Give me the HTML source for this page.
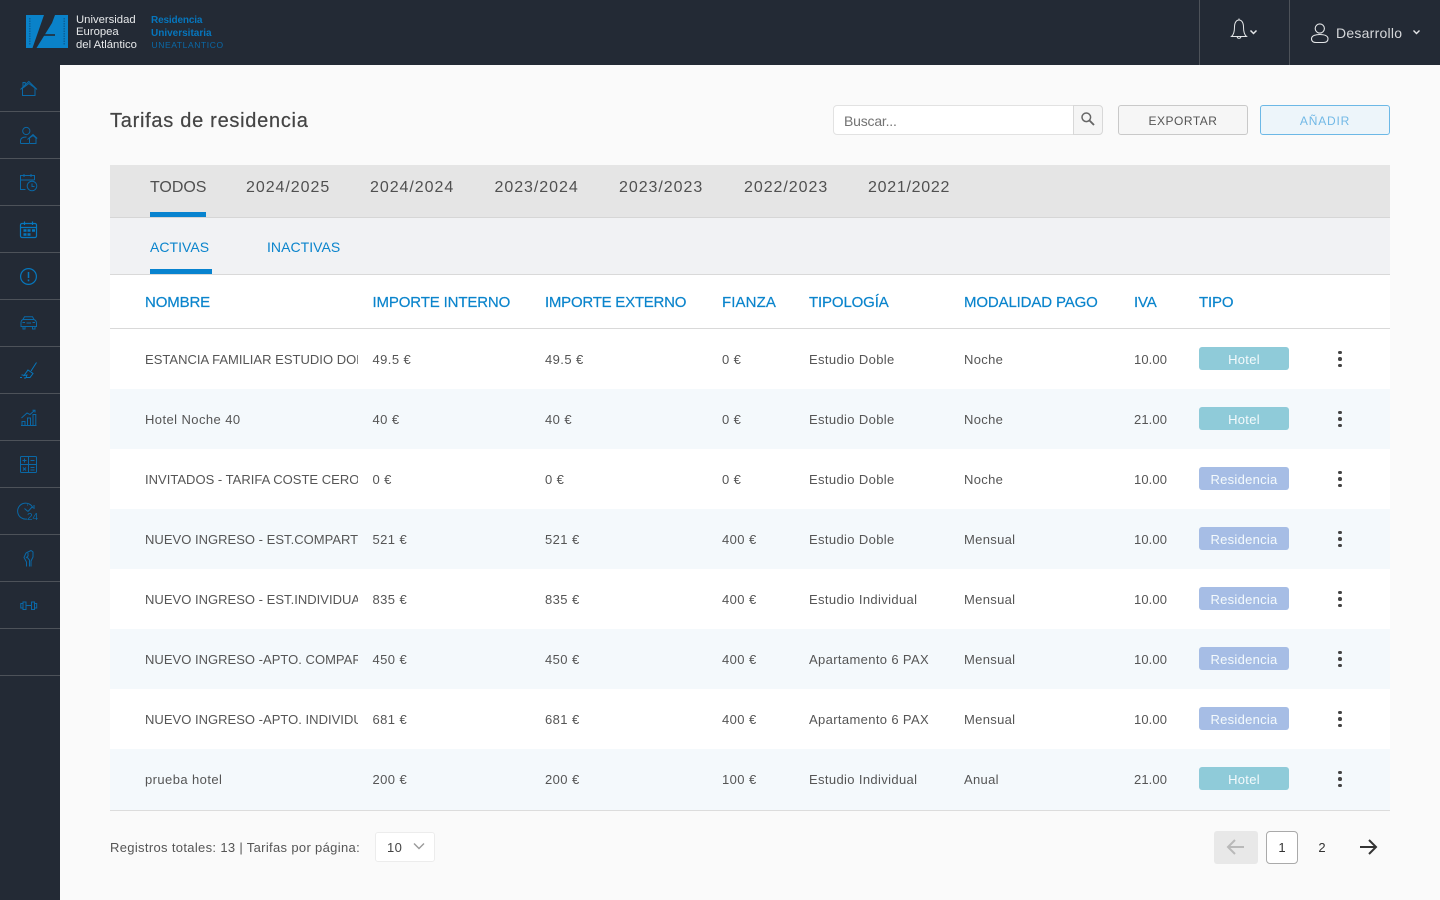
<!DOCTYPE html>
<html lang="es"><head><meta charset="utf-8"><title>Tarifas de residencia</title>
<style>
*{box-sizing:border-box}
html,body{margin:0;padding:0;width:1440px;height:900px;overflow:hidden;background:#fafafa;font-family:"Liberation Sans",sans-serif;color:#555}
.a{position:absolute;white-space:nowrap}
.top{position:absolute;left:0;top:0;width:1440px;height:65px;background:#232a35}
.side{position:absolute;left:0;top:65px;width:60px;height:835px;background:#232a35}
.div{position:absolute;left:0;width:60px;height:1px;background:#4d5259}
.tab{position:absolute;top:165px;height:52px;line-height:46px;font-size:16px;letter-spacing:.95px;color:#505050}
.sub{position:absolute;top:218px;height:56px;line-height:58px;font-size:14px;letter-spacing:.04px;color:#0a84cc}
.th{position:absolute;top:275px;height:53px;line-height:55px;font-size:15px;letter-spacing:-.14px;color:#0a84cc;-webkit-text-stroke:.2px #0a84cc}
.row{position:absolute;left:110px;width:1280px;height:60px;line-height:61px;font-size:13px;letter-spacing:.42px;color:#555;background:#fff}
.row.e{background:#f4f9fc}
.row span{position:absolute;top:0;white-space:nowrap}
.c1{left:35px;width:212.5px;overflow:hidden}
.c1.u{letter-spacing:.02px}
.c2{left:262.5px}.c3{left:435px}.c4{left:612px}.c5{left:699px;letter-spacing:.36px}.c6{left:854px;letter-spacing:.32px}.c7{left:1024px;letter-spacing:.1px}
.b{position:absolute;left:1089px;top:18px;width:90px;height:23px;border-radius:3px;line-height:25px;text-align:center;color:#f4fafc;font-size:13px;letter-spacing:.28px}
.h{background:#8fcbd9}.r{background:#a6bde5}
.k{position:absolute;left:1228px;width:3.6px;height:3.6px;border-radius:50%;background:#444}
</style></head><body>
<div class="top"></div>
<div class="side"></div>
<div class="div" style="top:111px"></div><div class="div" style="top:158px"></div><div class="div" style="top:205px"></div><div class="div" style="top:252px"></div><div class="div" style="top:299px"></div><div class="div" style="top:346px"></div><div class="div" style="top:393px"></div><div class="div" style="top:440px"></div><div class="div" style="top:487px"></div><div class="div" style="top:534px"></div><div class="div" style="top:581px"></div><div class="div" style="top:628px"></div><div class="div" style="top:675px"></div>

<!-- logo -->
<svg class="a" style="left:25px;top:14px" width="44" height="35" viewBox="0 0 44 35">
<rect x="1" y="1" width="42" height="33" fill="#0a82c9"/>
<path d="M19 1 H30 L27 9 L11.5 34 H7.5 Z" fill="#232a35"/>
<path d="M14 21 H30" stroke="#232a35" stroke-width="1.6"/>
<path d="M4.8 4 V31 M39.2 4 V31" stroke="#0a5f97" stroke-width="1.4" stroke-dasharray="1.5 1"/>
</svg>
<div class="a" style="left:76px;top:14px;font-size:11.3px;line-height:12px;color:#e6e8ea">Universidad<br>Europea<br><span style="position:relative;top:1px">del Atlántico</span></div>
<div class="a" style="left:151px;top:14px;font-size:10px;line-height:13px;font-weight:bold;color:#0676bd"><span style="letter-spacing:-.15px">Residencia</span><br>Universitaria</div>
<div class="a" style="left:151.5px;top:40px;font-size:8.5px;line-height:10px;color:#0a69a8;letter-spacing:.6px">UNEATLANTICO</div>

<!-- header right -->
<div class="a" style="left:1199px;top:0;width:1px;height:65px;background:#4d5259"></div>
<div class="a" style="left:1289px;top:0;width:1px;height:65px;background:#4d5259"></div>
<svg class="a" style="left:1225px;top:15px" width="40" height="30" fill="none" stroke="#e4e6e8" stroke-width="1">
<path d="M6.5 21.5 C9 19.5 9.5 16.5 9.5 12 C9.5 7.5 11.5 5 14 5 C16.5 5 18.5 7.5 18.5 12 C18.5 16.5 19 19.5 21.5 21.5 Z"/>
<path d="M12.2 22 C12.4 23.8 15.6 23.8 15.8 22"/><path d="M14 3.5 V5"/>
<path d="M25.5 15.5 L28.5 18.5 L31.5 15.5" stroke-width="1.5"/></svg>
<svg class="a" style="left:1310px;top:22px" width="20" height="22" fill="none" stroke="#e4e6e8" stroke-width="1.1">
<circle cx="9.8" cy="6.5" r="4.6"/>
<path d="M1.5 16.8 C1.5 13.5 6 12.5 9.8 12.5 C13.6 12.5 18 13.5 18 16.8 C18 19.5 16 20.5 13.5 20.5 H6 C3.5 20.5 1.5 19.5 1.5 16.8Z"/></svg>
<div class="a" style="left:1336px;top:23px;font-size:14px;line-height:20px;letter-spacing:.25px;color:#d5d7da">Desarrollo</div>
<svg class="a" style="left:1412px;top:29px" width="10" height="8" fill="none" stroke="#e4e6e8" stroke-width="1.4"><path d="M1.5 1.5 L4.5 4.5 L7.5 1.5"/></svg>

<!-- sidebar icons -->
<svg class="a" style="left:0;top:0" width="60" height="700" fill="none" stroke="#0a68a6" stroke-width="1">
<path d="M20.5 89.5 L28.8 81.5 L37 89.5 M23 87 V82.5 H25.2 V84.8 M22.5 88 V95.5 H35 V88 M23 88 L28.8 83.5 L35 88"/>
<circle cx="26.3" cy="131" r="3.6"/><path d="M20.5 143.5 V141 C20.5 138 23 137 26.5 137 M20.5 143.5 H29 M29.5 143.5 H36 V138 L33 135.5 L29.5 138 V143.5 M27.5 139.5 L33 134.5 L37.2 138.5"/>
<path d="M25.5 189.5 H20.5 V175.5 H34.5 V180 M20.5 180 H34.5 M24 174 V177 M31 174 V177"/><circle cx="32" cy="186" r="4.8"/><path d="M32 183.5 V186.5 H34.5"/>
<g stroke="#0677bd" stroke-width="1.2"><rect x="20.5" y="223.5" width="16" height="14" rx="1.5"/><path d="M20.5 227.5 H36.5 M24.5 221.5 V225 M32.5 221.5 V225"/><path d="M23.5 230.5 h3 M27.5 230.5 h3 M32 230.5 h3 M23.5 234.5 h3 M27.5 234.5 h3" stroke-width="2.4"/></g>
<g stroke="#0677bd" stroke-width="1.2"><circle cx="28.5" cy="276.5" r="7.9"/><path d="M28.5 272 V278 M28.5 279.5 V281.3" stroke-width="1.5"/></g>
<path d="M21 323 C21 320.5 22 320 23 319.5 L24.5 316.8 H32.5 L34 319.5 C35 320 36.5 320.5 36.5 323 V326.5 H21 Z M23 319.5 H34 M23 326.5 V329 H25 V326.5 M32.5 326.5 V329 H35 V326.5 M22.5 322.5 h2.5 M32.5 322.5 h2.5 M26.5 323 h4.5" />
<path stroke="#0677bd" d="M36.5 362.5 L31 371 M28 370 L33 373.5 L30 377.5 L26 377.5 L27 375 L24 375.5 Z M20 377.5 h2 M21.5 375 h2 M24 378 h2" />
<path d="M21 425.5 H36.5 M22 425 V421.5 H25 V425 M27.5 425 V418 H30.5 V425 M33 425 V414.5 H35.8 V425 M21.5 418 L27 413 L30 414.5 L34.5 410.5 M32.5 410.3 H35 V412.5" />
<rect x="20.5" y="456.5" width="16" height="16" rx="1"/><path d="M28.5 456.5 V472.5 M20.5 464.5 H36.5 M22.5 460.5 h4 M24.5 458.5 v4 M30.5 460.5 h4 M23 467.5 l3 3 M26 467.5 l-3 3 M30.5 467.5 h4 M30.5 470 h4"/>
<path d="M33 508 A8 8 0 1 0 27 519 M28 511.5 L32.5 506.5 M28 511.5 L24.5 508.5 M34 505 V509 M27.5 504.5 v1"/>
<text x="27" y="520" font-family="Liberation Sans,sans-serif" font-size="10" fill="#0a68a6" stroke="none">24</text>
<path d="M26 553 L31 550.5 L33 552 V557 L31 561 V566.5 M26.5 566.5 V562 L24 557.5 L26 553 M27 557 L29.5 560 V566.5 M28 553 V556 M26 558 L28.5 555.5" />
<path d="M26 605.5 H31.5"/><path d="M23 602 H26 V609.5 H23 Z M31.5 602 H34.5 V609.5 H31.5 Z M23 603.5 H20.8 V608 H23 M34.5 603.5 H36.7 V608 H34.5"/>
</svg>

<!-- title row -->
<div class="a" style="left:110px;top:108px;font-size:20px;line-height:26px;letter-spacing:.72px;color:#444;-webkit-text-stroke:.2px #444">Tarifas de residencia</div>
<div class="a" style="left:833px;top:105px;width:241px;height:30px;background:#fff;border:1px solid #e2e2e2;border-radius:4px 0 0 4px;font-size:14px;line-height:30px;padding-left:10px;color:#737373;letter-spacing:-.2px">Buscar...</div>
<div class="a" style="left:1073px;top:105px;width:30px;height:30px;background:#f5f5f5;border:1px solid #d8d8d8;border-radius:0 4px 4px 0"></div>
<svg class="a" style="left:1080px;top:111px" width="16" height="16" fill="none" stroke="#666" stroke-width="1.5"><circle cx="6.3" cy="6.3" r="4.3"/><path d="M9.5 9.5 L14 14" stroke-width="1.9"/></svg>
<div class="a" style="left:1118px;top:105px;width:130px;height:30px;background:#f6f6f6;border:1px solid #c9c9c9;border-radius:3px;text-align:center;font-size:12px;line-height:30px;letter-spacing:.5px;color:#555">EXPORTAR</div>
<div class="a" style="left:1260px;top:105px;width:130px;height:30px;background:#edf5fa;border:1px solid #6cb8e6;border-radius:3px;text-align:center;font-size:12px;line-height:30px;letter-spacing:.8px;color:#72b9e6">AÑADIR</div>

<!-- tabs -->
<div class="a" style="left:110px;top:165px;width:1280px;height:53px;background:#e5e5e5;border-bottom:1px solid #d6d6d6"></div>
<div class="a" style="left:110px;top:218px;width:1280px;height:57px;background:#f1f2f4;border-bottom:1px solid #d9d9d9"></div>
<div class="tab" style="left:150px;letter-spacing:-.05px">TODOS</div>
<div class="tab" style="left:246px">2024/2025</div>
<div class="tab" style="left:370px">2024/2024</div>
<div class="tab" style="left:494.5px">2023/2024</div>
<div class="tab" style="left:619px">2023/2023</div>
<div class="tab" style="left:744px">2022/2023</div>
<div class="tab" style="left:868px;letter-spacing:.72px">2021/2022</div>
<div class="a" style="left:150px;top:212px;width:56px;height:5px;background:#0883cf"></div>
<div class="sub" style="left:150px">ACTIVAS</div>
<div class="sub" style="left:267px">INACTIVAS</div>
<div class="a" style="left:150px;top:269px;width:62px;height:5px;background:#0883cf"></div>

<!-- table head -->
<div class="a" style="left:110px;top:275px;width:1280px;height:54px;background:#fff;border-bottom:1px solid #d9d9d9"></div>
<div class="th" style="left:145px">NOMBRE</div>
<div class="th" style="left:372.5px">IMPORTE INTERNO</div>
<div class="th" style="left:545px;letter-spacing:-.24px">IMPORTE EXTERNO</div>
<div class="th" style="left:722px;letter-spacing:.1px">FIANZA</div>
<div class="th" style="left:809px">TIPOLOGÍA</div>
<div class="th" style="left:964px">MODALIDAD PAGO</div>
<div class="th" style="left:1134px">IVA</div>
<div class="th" style="left:1199px">TIPO</div>

<!-- rows -->
<div class="row" style="top:329px"><span class="c1 u">ESTANCIA FAMILIAR ESTUDIO DOBLE</span><span class="c2">49.5 €</span><span class="c3">49.5 €</span><span class="c4">0 €</span><span class="c5">Estudio Doble</span><span class="c6">Noche</span><span class="c7">10.00</span><div class="b h">Hotel</div><i class="k" style="top:21.5px"></i><i class="k" style="top:28.2px"></i><i class="k" style="top:34.6px"></i></div>
<div class="row e" style="top:389px"><span class="c1">Hotel Noche 40</span><span class="c2">40 €</span><span class="c3">40 €</span><span class="c4">0 €</span><span class="c5">Estudio Doble</span><span class="c6">Noche</span><span class="c7">21.00</span><div class="b h">Hotel</div><i class="k" style="top:21.5px"></i><i class="k" style="top:28.2px"></i><i class="k" style="top:34.6px"></i></div>
<div class="row" style="top:449px"><span class="c1 u">INVITADOS - TARIFA COSTE CERO</span><span class="c2">0 €</span><span class="c3">0 €</span><span class="c4">0 €</span><span class="c5">Estudio Doble</span><span class="c6">Noche</span><span class="c7">10.00</span><div class="b r">Residencia</div><i class="k" style="top:21.5px"></i><i class="k" style="top:28.2px"></i><i class="k" style="top:34.6px"></i></div>
<div class="row e" style="top:509px"><span class="c1 u">NUEVO INGRESO - EST.COMPARTIDO</span><span class="c2">521 €</span><span class="c3">521 €</span><span class="c4">400 €</span><span class="c5">Estudio Doble</span><span class="c6">Mensual</span><span class="c7">10.00</span><div class="b r">Residencia</div><i class="k" style="top:21.5px"></i><i class="k" style="top:28.2px"></i><i class="k" style="top:34.6px"></i></div>
<div class="row" style="top:569px"><span class="c1 u">NUEVO INGRESO - EST.INDIVIDUAL</span><span class="c2">835 €</span><span class="c3">835 €</span><span class="c4">400 €</span><span class="c5">Estudio Individual</span><span class="c6">Mensual</span><span class="c7">10.00</span><div class="b r">Residencia</div><i class="k" style="top:21.5px"></i><i class="k" style="top:28.2px"></i><i class="k" style="top:34.6px"></i></div>
<div class="row e" style="top:629px"><span class="c1 u">NUEVO INGRESO -APTO. COMPARTIDO</span><span class="c2">450 €</span><span class="c3">450 €</span><span class="c4">400 €</span><span class="c5">Apartamento 6 PAX</span><span class="c6">Mensual</span><span class="c7">10.00</span><div class="b r">Residencia</div><i class="k" style="top:21.5px"></i><i class="k" style="top:28.2px"></i><i class="k" style="top:34.6px"></i></div>
<div class="row" style="top:689px"><span class="c1 u">NUEVO INGRESO -APTO. INDIVIDUAL</span><span class="c2">681 €</span><span class="c3">681 €</span><span class="c4">400 €</span><span class="c5">Apartamento 6 PAX</span><span class="c6">Mensual</span><span class="c7">10.00</span><div class="b r">Residencia</div><i class="k" style="top:21.5px"></i><i class="k" style="top:28.2px"></i><i class="k" style="top:34.6px"></i></div>
<div class="row e" style="top:749px;height:62px;border-bottom:1px solid #dcdcdc"><span class="c1">prueba hotel</span><span class="c2">200 €</span><span class="c3">200 €</span><span class="c4">100 €</span><span class="c5">Estudio Individual</span><span class="c6">Anual</span><span class="c7">21.00</span><div class="b h">Hotel</div><i class="k" style="top:21.5px"></i><i class="k" style="top:28.2px"></i><i class="k" style="top:34.6px"></i></div>

<!-- footer -->
<div class="a" style="left:110px;top:839px;font-size:13px;line-height:18px;letter-spacing:.33px;color:#555">Registros totales: 13 | Tarifas por página:</div>
<div class="a" style="left:375px;top:832px;width:60px;height:30px;background:#fff;border:1px solid #ececec;border-radius:3px;font-size:13px;line-height:30px;padding-left:11px;color:#444;letter-spacing:.4px">10</div>
<svg class="a" style="left:413px;top:842px" width="13" height="10" fill="none" stroke="#999" stroke-width="1.4"><path d="M1 1.5 L6 6.5 L11 1.5"/></svg>
<div class="a" style="left:1214px;top:831px;width:44px;height:33px;background:#e8e8e8;border-radius:3px"></div>
<svg class="a" style="left:1226px;top:838px" width="20" height="18" fill="none" stroke="#b9b9b9" stroke-width="2"><path d="M18 9 H2 M9 2 L2 9 L9 16"/></svg>
<div class="a" style="left:1266px;top:831px;width:32px;height:33px;background:#fff;border:1px solid #aaa;border-radius:4px;text-align:center;font-size:13px;line-height:32px;color:#333">1</div>
<div class="a" style="left:1306px;top:831px;width:32px;height:33px;text-align:center;font-size:13px;line-height:33px;color:#333">2</div>
<svg class="a" style="left:1359px;top:838px" width="20" height="18" fill="none" stroke="#333" stroke-width="2"><path d="M1 9 H17 M10 2 L17 9 L10 16"/></svg>
</body></html>
